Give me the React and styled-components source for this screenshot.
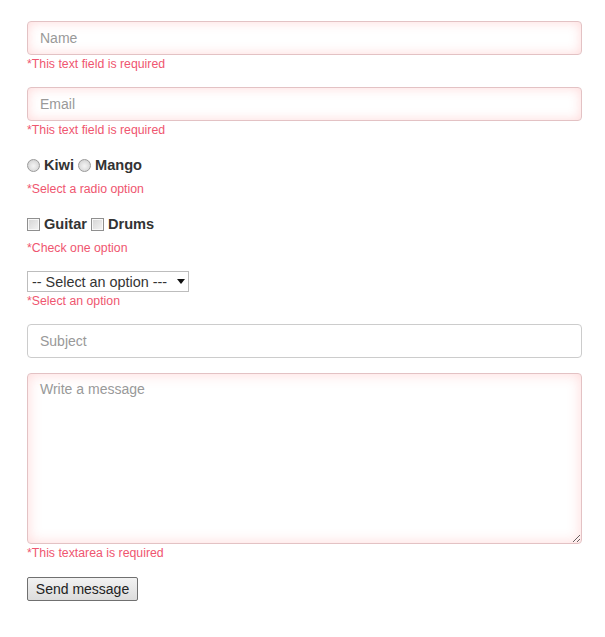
import React from 'react';
import styled, {createGlobalStyle} from 'styled-components';

const GlobalStyle = createGlobalStyle`
  body {
    margin: 0;
    background: #fff;
    font-family: "Liberation Sans", Arial, sans-serif;
  }
`

function App() {
  return (
    <>
      <GlobalStyle />
      <Form onSubmit={e => e.preventDefault()}>
        <Field space={16}>
          <TextInput type="text" placeholder="Name" invalid />
          <Error>*This text field is required</Error>
        </Field>
        <Field space={19}>
          <TextInput type="text" placeholder="Email" invalid />
          <Error>*This text field is required</Error>
        </Field>
        <Field space={19}>
          <Choices>
            <Choice><Radio type="radio" name="fruit" /> Kiwi</Choice>
            <Choice><Radio type="radio" name="fruit" /> Mango</Choice>
          </Choices>
          <Error top={8}>*Select a radio option</Error>
        </Field>
        <Field space={16}>
          <Choices>
            <Choice><Check type="checkbox" /> Guitar</Choice>
            <Choice><Check type="checkbox" /> Drums</Choice>
          </Choices>
          <Error top={8}>*Check one option</Error>
        </Field>
        <Field space={16}>
          <SelectWrap>
            <Select defaultValue="">
              <option value="">-- Select an option ---</option>
              <option value="a">Option A</option>
              <option value="b">Option B</option>
            </Select>
          </SelectWrap>
          <Error>*Select an option</Error>
        </Field>
        <Field space={15}>
          <TextInput type="text" placeholder="Subject" />
        </Field>
        <Field space={17}>
          <TextArea placeholder="Write a message" invalid />
          <Error>*This textarea is required</Error>
        </Field>
        <Button type="submit">Send message</Button>
      </Form>
    </>
  )
}

export default App

const Form = styled.form`
  display: flex;
  flex-direction: column;
  align-items: flex-start;
  padding: 21px 23px 0 27px;
`

const Field = styled.div`
  display: flex;
  flex-direction: column;
  align-items: flex-start;
  width: 555px;
  margin-bottom: ${props => props.space}px;
`

const TextInput = styled.input`
  box-sizing: border-box;
  width: 555px;
  height: 34px;
  padding: 0 12px;
  border: 1px solid ${props => props.invalid ? '#e3c2c4' : '#cccccc'};
  border-radius: 4px;
  font-family: "Liberation Sans", Arial, sans-serif;
  font-size: 14px;
  color: #555;
  background: #fff;
  box-shadow: ${props => props.invalid ? 'inset 0 0 12px rgba(255, 80, 80, 0.22)' : 'none'};
  outline: none;

  &::placeholder {
    color: #999;
  }
`

const TextArea = styled.textarea`
  box-sizing: border-box;
  width: 555px;
  height: 171px;
  padding: 7px 12px;
  border: 1px solid ${props => props.invalid ? '#e3c2c4' : '#cccccc'};
  border-radius: 4px;
  font-family: "Liberation Sans", Arial, sans-serif;
  font-size: 14px;
  color: #555;
  box-shadow: ${props => props.invalid ? 'inset 0 0 14px rgba(255, 80, 80, 0.22)' : 'none'};
  outline: none;
  resize: vertical;

  &::placeholder {
    color: #999;
  }
`

const Error = styled.span`
  display: block;
  margin-top: ${props => props.top || 2}px;
  font-size: 12.3px;
  line-height: 14px;
  color: #ef5670;
`

const Choices = styled.div`
  display: flex;
  align-items: center;
  gap: 4px;
  height: 18px;
`

const Choice = styled.label`
  display: flex;
  align-items: center;
  gap: 4px;
  font-size: 14.6px;
  font-weight: bold;
  color: #333;
`

const Radio = styled.input`
  appearance: none;
  box-sizing: border-box;
  margin: 0;
  width: 13px;
  height: 13px;
  border-radius: 50%;
  border: 1px solid #9a9a9a;
  background: radial-gradient(circle at 50% 55%, #f4f4f4 0, #e2e2e2 45%, #c8c8c8 100%);

  &:checked {
    background: radial-gradient(circle, #333 0, #333 30%, #e2e2e2 35%, #c8c8c8 100%);
  }
`

const Check = styled.input`
  appearance: none;
  box-sizing: border-box;
  margin: 0;
  width: 13px;
  height: 13px;
  border: 1px solid #8f8f8f;
  background: linear-gradient(135deg, #d4d4d4, #f4f4f4);
  box-shadow: inset 0 0 0 1px #f8f8f8;

  &:checked {
    background: #333;
  }
`

const SelectWrap = styled.span`
  position: relative;
  display: inline-block;

  &::after {
    content: '';
    position: absolute;
    right: 4px;
    top: 8px;
    border-left: 4px solid transparent;
    border-right: 4px solid transparent;
    border-top: 5px solid #111;
    pointer-events: none;
  }
`

const Select = styled.select`
  appearance: none;
  display: block;
  box-sizing: border-box;
  height: 21px;
  width: 162px;
  margin: 0;
  font-family: "Liberation Sans", Arial, sans-serif;
  font-size: 14.4px;
  color: #333;
  border: 1px solid #bdbdbd;
  border-radius: 0;
  background: #fff;
  padding: 0 2px 0 4px;
`

const Button = styled.button`
  width: 111px;
  height: 24px;
  font-family: "Liberation Sans", Arial, sans-serif;
  font-size: 14px;
  color: #222;
  border: 1px solid #707070;
  border-radius: 2px;
  background: linear-gradient(#f2f2f2, #dcdcdc);
  padding: 0;
`
